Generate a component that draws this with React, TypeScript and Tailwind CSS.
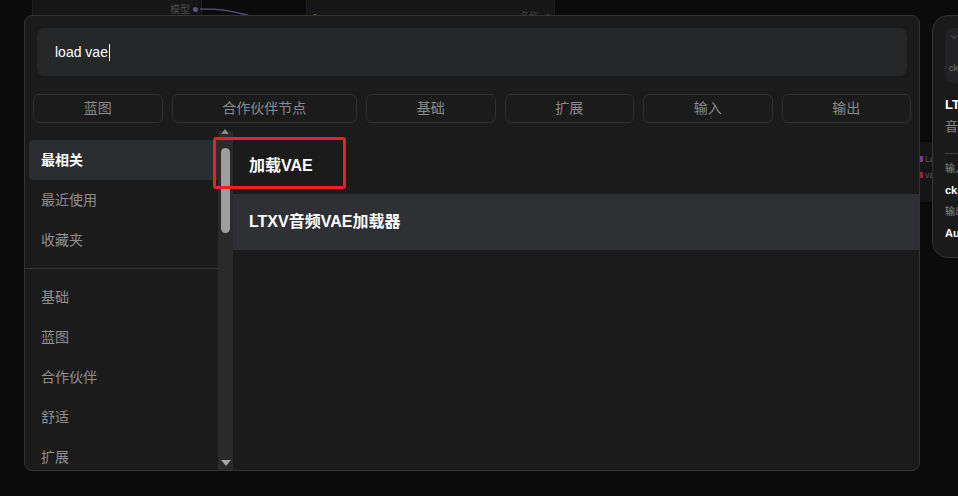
import { ChevronDown } from 'lucide-react';

const FONT = "font-['Liberation_Sans','Noto_Sans_CJK_SC',sans-serif]";

const categories = ['蓝图', '合作伙伴节点', '基础', '扩展', '输入', '输出'];

const sideTop = ['最相关', '最近使用', '收藏夹'];
const sideGroups = ['基础', '蓝图', '合作伙伴', '舒适', '扩展'];

const results = ['加载VAE', 'LTXV音频VAE加载器'];

/** Faint graph nodes sitting behind the search dialog. */
function CanvasBackdrop() {
  return (
    <>
      <div className="absolute left-[32px] top-[-20px] h-[40px] w-[170px] rounded bg-[#161616] border border-[#1f1f1f]">
        <span className="absolute right-[11px] top-[24px] text-[10px] leading-none text-[#4a4a4a]">模型</span>
        <span className="absolute right-[3px] top-[26px] h-[5px] w-[5px] rounded-full bg-[#5b5580]" />
      </div>
      <svg className="absolute left-[200px] top-0" width="60" height="20" viewBox="0 0 60 20">
        <path d="M0 9 C 20 9, 30 10, 50 16" stroke="#4f4870" strokeWidth="1.5" fill="none" />
      </svg>
      <div className="absolute left-[306px] top-[-20px] h-[40px] w-[249px] rounded bg-[#171717] border border-[#1f1f1f]">
        <span className="absolute left-[8px] top-[14px] h-[4px] w-[4px] rounded-full bg-[#3a3a3a]" />
        <span className="absolute left-[6px] top-[33px] h-[4px] w-[4px] rounded-full bg-[#7a6420]" />
        <span className="absolute right-[16px] top-[31px] text-[9px] leading-none text-[#444]">名称</span>
        <span className="absolute right-[4px] top-[33px] h-[4px] w-[4px] rounded-full bg-[#7a4a20]" />
      </div>
      <div className="absolute left-[914px] top-[142px] h-[60px] w-[40px] rounded bg-[#151515]">
        <span className="absolute left-[6px] top-[14px] h-[6px] w-[3px] bg-[#7a3a8a]" />
        <span className="absolute left-[11px] top-[11px] text-[9px] text-[#555]">La</span>
        <span className="absolute left-[6px] top-[30px] h-[6px] w-[3px] bg-[#8a2a2a]" />
        <span className="absolute left-[11px] top-[27px] text-[9px] text-[#555]">va</span>
      </div>
    </>
  );
}

/** Node preview card docked to the right of the dialog. */
function PreviewPanel() {
  return (
    <div className="absolute left-[932px] top-[15px] flex h-[243px] w-[140px] flex-col rounded-[16px] border border-[#343434] bg-[#1a1a1b] px-[12px] pt-[12px]">
      <div className="flex h-[55px] flex-col justify-between rounded-[8px] bg-[#232325] p-[4px] pb-[10px]">
        <ChevronDown size={10} className="text-[#6a6a8a]" />
        <div className="text-[9px] leading-none text-[#777]">ckpt_name</div>
      </div>
      <div className="mt-[15px] text-[13px] font-bold leading-none text-white">LTXV 音频</div>
      <div className="mt-[9px] text-[13px] leading-none text-[#888]">音频</div>
      <div className="mt-[20px] h-px bg-[#3a3a3a]" />
      <div className="mt-[10px] flex flex-col gap-[11px] text-[10px] leading-none">
        <div className="text-[#888]">输入</div>
        <div className="text-[11px] font-bold text-white">ckpt_name</div>
        <div className="text-[#888]">输出</div>
        <div className="text-[11px] font-bold text-white">Audio VAE</div>
      </div>
    </div>
  );
}

function Scrollbar() {
  return (
    <div className="relative w-[15px] shrink-0 bg-[#2a2a2a]">
      <div className="absolute left-[3px] top-[-2px] h-0 w-0 border-x-[4px] border-b-[5px] border-x-transparent border-b-[#8a8a8a]" />
      <div className="absolute left-[3px] top-[17px] h-[85px] w-[9px] rounded-full bg-[#9e9e9e]" />
      <div className="absolute bottom-[4px] left-[3px] h-0 w-0 border-x-[5px] border-t-[6px] border-x-transparent border-t-[#a5a5a5]" />
    </div>
  );
}

export default function App() {
  return (
    <div className={`relative h-[496px] w-[958px] overflow-hidden bg-[#0b0b0b] ${FONT}`}>
      <CanvasBackdrop />
      <PreviewPanel />

      <div className="absolute left-[24px] top-[15px] flex h-[456px] w-[896px] flex-col overflow-hidden rounded-[8px] border border-[#333335] bg-[#1b1b1c]">
        {/* Search field */}
        <div className="px-[12px] pt-[12px]">
          <div className="flex h-[48px] items-center rounded-[8px] bg-[#262729] px-[18px] text-[14px] text-white">
            load vae
            <span className="ml-px h-[17px] w-px bg-white" />
          </div>
        </div>

        {/* Category filters */}
        <div className="mt-[18px] flex gap-[9px] px-[8px]">
          {categories.map(c => (
            <button
              key={c}
              className="h-[29px] flex-auto rounded-[6px] border border-[#2f2f31] px-[28px] text-[14px] text-[#8a8a8a]"
            >
              {c}
            </button>
          ))}
        </div>

        {/* Body */}
        <div className="mt-[8px] flex min-h-0 flex-1">
          <div className="w-[193px] shrink-0 pt-[9px] pl-[4px] text-[14px]">
            {sideTop.map((s, i) => (
              <div
                key={s}
                className={`flex h-[40px] items-center rounded-l-[4px] pl-[12px] ${
                  i === 0 ? 'bg-[#2c2d30] font-bold text-white' : 'text-[#8f8f8f]'
                }`}
              >
                {s}
              </div>
            ))}
            <div className="my-[8px] -ml-[4px] h-px bg-[#363638]" />
            {sideGroups.map(s => (
              <div key={s} className="flex h-[40px] items-center pl-[12px] text-[#8f8f8f]">
                {s}
              </div>
            ))}
          </div>
          <Scrollbar />
          <div className="flex-1 pt-[7px]">
            {results.map((r, i) => (
              <div
                key={r}
                className={`flex h-[56px] items-center pl-[16px] text-[16px] font-bold text-white ${
                  i === 1 ? 'bg-[#2f3033]' : ''
                }`}
              >
                {r}
              </div>
            ))}
          </div>
        </div>
      </div>

      {/* Highlight frame around the first result */}
      <div className="absolute left-[213px] top-[137px] h-[52px] w-[133px] rounded-[3px] border-[3px] border-[#e8202a]" />
    </div>
  );
}
